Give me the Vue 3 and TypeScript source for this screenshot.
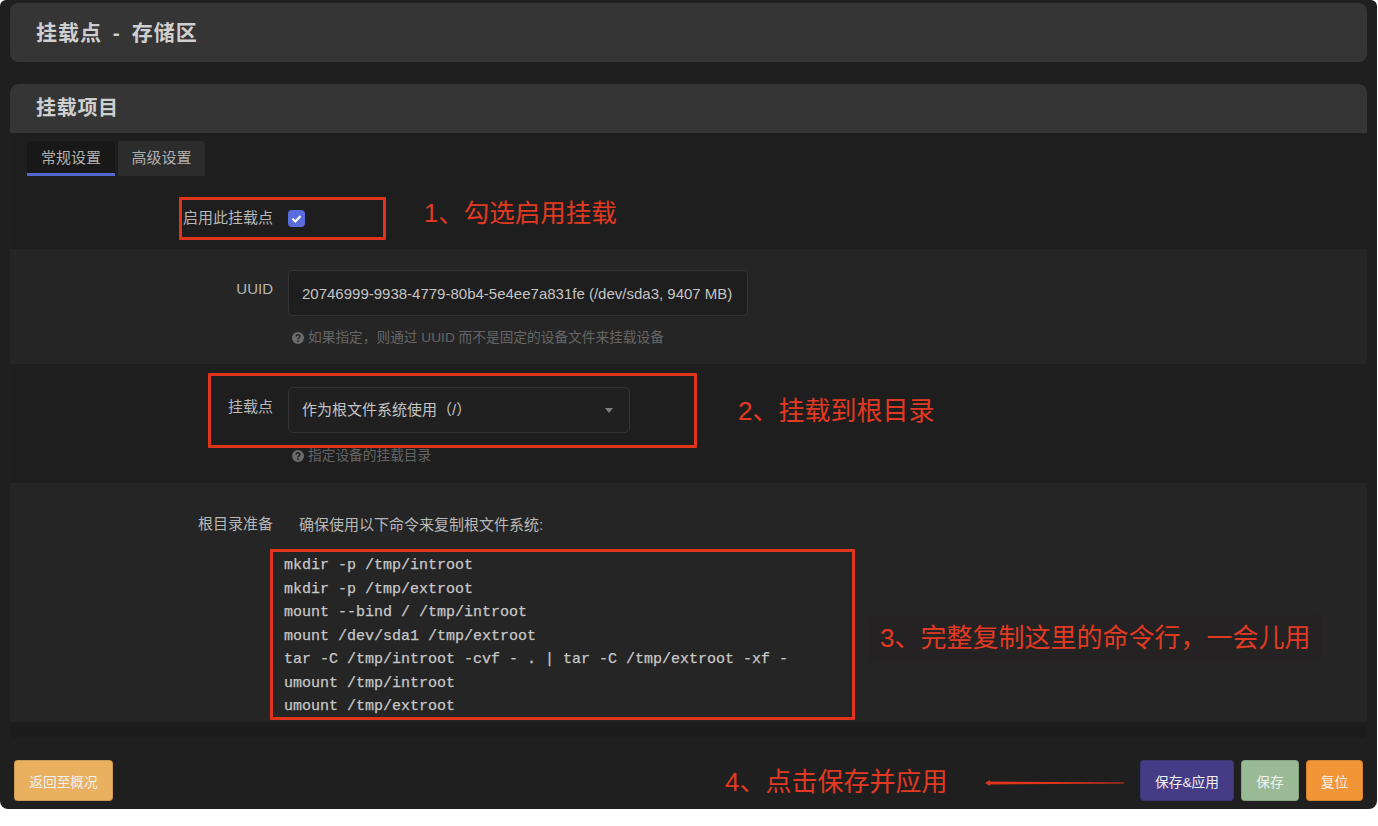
<script setup lang="ts">
const commands: string[] = [
  'mkdir -p /tmp/introot',
  'mkdir -p /tmp/extroot',
  'mount --bind / /tmp/introot',
  'mount /dev/sda1 /tmp/extroot',
  'tar -C /tmp/introot -cvf - . | tar -C /tmp/extroot -xf -',
  'umount /tmp/introot',
  'umount /tmp/extroot',
]
</script>

<template>
  <div class="page">
    <header class="card-head top">挂载点 - 存储区</header>

    <section class="section">
      <h2 class="card-head sub">挂载项目</h2>
      <div class="first">
        <div class="tabs">
          <span class="tab active">常规设置</span>
          <span class="tab">高级设置</span>
        </div>
        <div class="row enable">
          <span class="label">启用此挂载点</span>
          <span class="check">
            <svg viewBox="0 0 16 16" width="13" height="13"><path d="M3 8.4 6.5 11.6 13 4.8" fill="none" stroke="#fff" stroke-width="2.6" /></svg>
          </span>
        </div>
      </div>

      <div class="row alt uuid">
        <span class="label">UUID</span>
        <div class="value">
          <div class="field wide">20746999-9938-4779-80b4-5e4ee7a831fe (/dev/sda3, 9407 MB)</div>
          <p class="help">
            <svg class="q" viewBox="0 0 12 12" width="12" height="12"><circle cx="6" cy="6" r="6" fill="#6b6b6b" /><path d="M4.2 4.6c0-2.3 3.7-2.3 3.7-.1 0 1.4-1.9 1.3-1.9 2.7" fill="none" stroke="#252525" stroke-width="1.5" /><rect x="5.2" y="8.3" width="1.6" height="1.6" fill="#252525" /></svg>
            如果指定，则通过 UUID 而不是固定的设备文件来挂载设备
          </p>
        </div>
      </div>

      <div class="row mount">
        <span class="label">挂载点</span>
        <div class="value">
          <div class="field select">
            <span>作为根文件系统使用（/）</span>
            <i class="caret"></i>
          </div>
          <p class="help">
            <svg class="q" viewBox="0 0 12 12" width="12" height="12"><circle cx="6" cy="6" r="6" fill="#6b6b6b" /><path d="M4.2 4.6c0-2.3 3.7-2.3 3.7-.1 0 1.4-1.9 1.3-1.9 2.7" fill="none" stroke="#1e1e1e" stroke-width="1.5" /><rect x="5.2" y="8.3" width="1.6" height="1.6" fill="#1e1e1e" /></svg>
            指定设备的挂载目录
          </p>
        </div>
      </div>

      <div class="row alt root">
        <span class="label">根目录准备</span>
        <div class="value">
          <p class="intro">确保使用以下命令来复制根文件系统:</p>
          <pre class="code"><code v-for="c in commands" :key="c">{{ c }}</code></pre>
        </div>
      </div>
    </section>

    <footer class="actions">
      <button class="btn back">返回至概况</button>
      <div class="right">
        <button class="btn apply">保存&amp;应用</button>
        <button class="btn save">保存</button>
        <button class="btn reset">复位</button>
      </div>
    </footer>

    <div class="mark m1"></div>
    <div class="mark m2"></div>
    <div class="mark m3"></div>
    <span class="note n1">1、勾选启用挂载</span>
    <span class="note n2">2、挂载到根目录</span>
    <span class="note n3">3、完整复制这里的命令行，一会儿用</span>
    <span class="note n4">4、点击保存并应用</span>
    <svg class="arrow" viewBox="0 0 140 8" width="140" height="8"><path d="M0 4 5 1V2.6L139 3.6V4.4L5 5.4V7Z" fill="#e0341c" /></svg>
  </div>
</template>

<style>
html, body { margin: 0; background: #fff; }
</style>

<style scoped>
.page {
  position: relative;
  box-sizing: border-box;
  width: 1377px;
  height: 809px;
  padding: 3px 10px 0;
  background: #1f1f1f;
  border-radius: 6px 6px 8px 8px;
  overflow: hidden;
  color: #b4b4b4;
  font: 15px "Liberation Sans", "Noto Sans CJK SC", sans-serif;
}
.card-head {
  margin: 0;
  box-sizing: border-box;
  padding-left: 26px;
  background: #353535;
  color: #cfcfcf;
  font-size: 20px;
  font-weight: 700;
  letter-spacing: 0.7px;
  display: flex;
  align-items: center;
}
.top { height: 59px; width: 1357px; border-radius: 8px; padding-bottom: 3px; font-size: 21px; letter-spacing: 1px; word-spacing: 4px; }
.section { margin-top: 22px; width: 1357px; height: 654px; background: #1c1c1c; border-radius: 8px 8px 6px 6px; overflow: hidden; }
.sub { height: 49px; border-radius: 8px 8px 0 0; padding-bottom: 5px; }
.first { height: 116px; background: #1e1e1e; }
.tabs { display: flex; gap: 3px; padding: 8px 0 0 17px; }
.tab {
  box-sizing: border-box;
  width: 87px; height: 35px;
  display: flex; align-items: center; justify-content: center;
  background: #2c2c2c;
  border-radius: 4px 4px 0 0;
  color: #b0b0b0;
  padding-bottom: 5px;
}
.tab.active { width: 88px; background: #181818; border-bottom: 3px solid #5467cf; padding-bottom: 2px; }
.row { display: grid; grid-template-columns: 263px 1fr; column-gap: 15px; }
.enable { padding-top: 32px; align-items: center; }
.row.alt { background: #252525; }
.label { text-align: right; color: #b8b8b8; line-height: 20px; }
.check {
  width: 17px; height: 17px; border-radius: 4px;
  background: #5a6bdc;
  display: flex; align-items: center; justify-content: center;
}
.uuid { height: 115px; padding-top: 21px; box-sizing: border-box; }
.uuid .label { padding-top: 9px; }
.mount { height: 119px; padding-top: 23px; box-sizing: border-box; background: #1e1e1e; }
.mount .label { padding-top: 10px; }
.root { height: 239px; padding-top: 31px; box-sizing: border-box; }
.field {
  box-sizing: border-box;
  height: 46px;
  display: flex; align-items: center;
  padding: 0 13px 4px;
  background: #1e1e1e;
  border: 1px solid #343434;
  border-radius: 5px;
  color: #c4c4c4;
}
.wide { width: 460px; white-space: nowrap; padding-bottom: 0; }
.select { width: 342px; justify-content: space-between; background: #202020; }
.caret { width: 0; height: 0; margin: 4px 3px 0 0; border: 4px solid transparent; border-top: 5px solid #7d7d7d; border-bottom: 0; }
.help {
  margin: 13px 0 0 4px;
  display: flex; align-items: center; gap: 4px;
  color: #656565;
  font-size: 13.7px;
  line-height: 18px;
}
.mount .help { margin-top: 14px; }
.q { flex: none; }
.intro { margin: 1px 0 0 11px; color: #b8b8b8; line-height: 20px; }
.code {
  margin: 19px 0 0 -4px;
  font: 15px/23.5px "Liberation Mono", monospace;
  color: #c8c8c8;
  display: flex; flex-direction: column;
  -webkit-text-stroke: 0.25px #c8c8c8;
}
.code code { font: inherit; height: 23.5px; }
.actions { display: flex; justify-content: space-between; padding: 22px 4px 0 4px; }
.right { display: flex; gap: 7px; }
.btn {
  box-sizing: border-box;
  height: 41px;
  padding: 0;
  border: 1px solid rgba(0,0,0,.12);
  border-radius: 4px;
  color: #f1f1f1;
  font: 13.7px "Liberation Sans", "Noto Sans CJK SC", sans-serif;
}
.back { width: 99px; background: #e8b05f; }
.apply { width: 94px; background: #463c85; }
.save { width: 58px; background: #9aba96; }
.reset { width: 57px; background: #f29537; }
.mark { position: absolute; box-sizing: border-box; border: 3px solid #e0341c; border-radius: 1px; }
.m1 { left: 179px; top: 197px; width: 207px; height: 43px; }
.m2 { left: 208px; top: 373px; width: 489px; height: 75px; }
.m3 { left: 270px; top: 549px; width: 585px; height: 171px; }
.note { position: absolute; color: #e23a22; font-size: 26px; line-height: 34px; white-space: nowrap; }
.n1 { left: 424px; top: 196px; font-size: 25.5px; }
.n2 { left: 738px; top: 394px; }
.n3 { left: 869px; top: 615px; padding: 6px 11px; background: #242222; border-radius: 3px; }
.n4 { left: 725px; top: 765px; }
.arrow { position: absolute; left: 985px; top: 779px; }
</style>
